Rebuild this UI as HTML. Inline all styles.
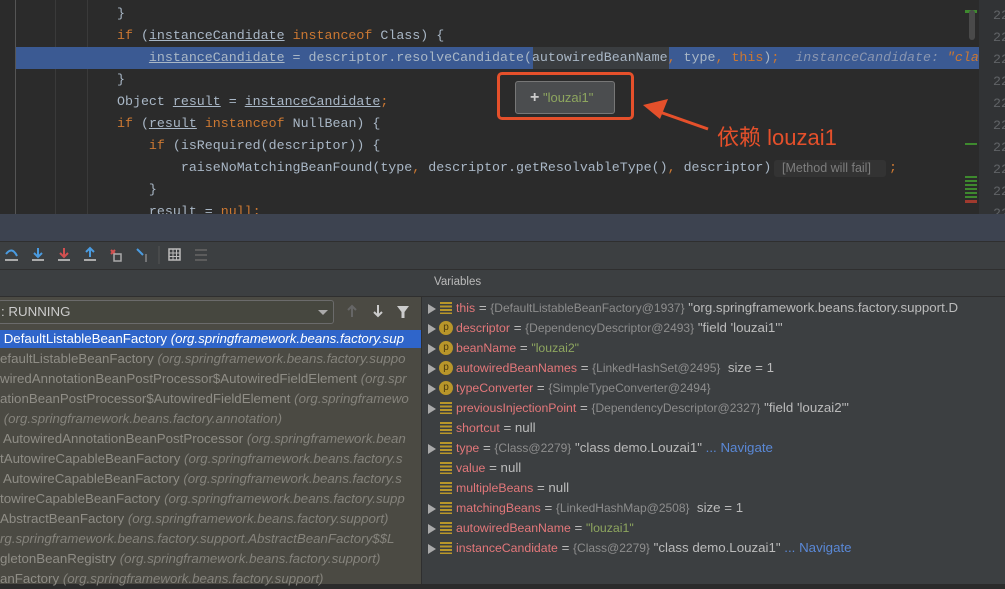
<!DOCTYPE html>
<html><head><meta charset="utf-8"><style>
*{margin:0;padding:0;box-sizing:border-box}
body{width:1005px;height:584px;overflow:hidden;background:#2b2b2b;position:relative;font-family:"Liberation Sans",sans-serif}
.ab{position:absolute}
.code{font-family:"Liberation Mono",monospace;font-size:13.3px;color:#a9b7c6;white-space:pre;line-height:22px}
.k{color:#cc7832}.u{text-decoration:underline}
.fr{position:absolute;left:0;font-size:13.3px;color:#8f8d86;white-space:pre;height:20px;line-height:20px}
.fr i{color:#85837c}
.vr{position:absolute;left:424px;height:20px;line-height:20px;font-size:13.3px;color:#bbb;white-space:pre}
.vr .a{position:absolute;left:4px;top:6px;width:0;height:0;border-left:8px solid #aaa;border-top:5px solid transparent;border-bottom:5px solid transparent}
.vr .l{position:absolute;left:16px;top:4px;width:12px;height:12px;background:repeating-linear-gradient(#b8962a 0 2px,transparent 2px 3.5px)}
.vr .p{position:absolute;left:15px;top:3px;width:14px;height:14px;border-radius:50%;background:#b8962a;color:#4a3a10;font-size:10px;line-height:14px;text-align:center}
.vr .t{position:absolute;left:32px}
.n{color:#e3777a;font-size:12.3px}.g{color:#8d8d8d;font-size:12px}.s{color:#8ea65f;font-size:12.3px}.nv{color:#5a88d6}
</style></head><body>
<div class="ab" style="left:15px;top:0;width:1px;height:214px;background:#555"></div>
<div class="ab" style="left:55px;top:0;width:1px;height:214px;background:#3a3a3a"></div>
<div class="ab" style="left:87px;top:0;width:1px;height:214px;background:#3a3a3a"></div>
<div class="ab" style="left:16px;top:47px;width:963px;height:22px;background:#3b5a93"></div>
<div class="ab" style="left:533px;top:47px;width:136px;height:22px;background:#3a3d40"></div>
<div class="ab code" style="left:117px;top:3px">}
<span class="k">if</span> (<span class="u">instanceCandidate</span> <span class="k">instanceof</span> Class) {
    <span class="u">instanceCandidate</span> = descriptor.resolveCandidate(autowiredBeanName<span class="k">,</span> type<span class="k">,</span> <span class="k">this</span>)<span class="k">;</span>  <i style="color:#8a96b0">instanceCandidate: </i><i class="k">"cla</i>
}
Object <span class="u">result</span> = <span class="u">instanceCandidate</span><span class="k">;</span>
<span class="k">if</span> (<span class="u">result</span> <span class="k">instanceof</span> NullBean) {
    <span class="k">if</span> (isRequired(descriptor)) {
        raiseNoMatchingBeanFound(type<span class="k">,</span> descriptor.getResolvableType()<span class="k">,</span> descriptor)
    }
    result = <span class="k">null;</span></div>
<div class="ab code k" style="left:889px;top:157px">;</div>
<div class="ab" style="left:774px;top:160px;width:112px;height:17px;background:#333;border-radius:3px;color:#7d7d7d;font-size:12.5px;line-height:17px;padding-left:8px">[Method will fail]</div>
<div class="ab" style="left:979px;top:0;width:26px;height:214px;background:#313335"></div>
<div class="ab code" style="left:993px;top:5px;color:#606366;line-height:22px">22
22
22
22
22
22
22
22
22
22</div>
<div class="ab" style="left:965px;top:10px;width:12px;height:3px;background:#3e8a2e"></div>
<div class="ab" style="left:969px;top:10px;width:6px;height:30px;background:#4a4a4a;border-radius:3px"></div>
<div class="ab" style="left:965px;top:143px;width:12px;height:2px;background:#3e8a2e"></div>
<div class="ab" style="left:965px;top:176px;width:12px;height:24px;background:repeating-linear-gradient(#3e8a2e 0 2px,transparent 2px 4px)"></div>
<div class="ab" style="left:965px;top:200px;width:12px;height:3px;background:#a03a2e"></div>
<div class="ab" style="left:497px;top:72px;width:137px;height:48px;border:3px solid #e5502b;border-radius:5px"></div>
<div class="ab" style="left:515px;top:81px;width:100px;height:33px;background:#4b4d4f;border:1px solid #777;border-radius:3px;font-size:13px;line-height:31px;color:#8ea65f;padding-left:14px"><b style="color:#ccc;font-size:16px">+</b> "louzai1"</div>
<svg class="ab" style="left:640px;top:95px" width="70" height="40"><line x1="68" y1="34" x2="14" y2="15" stroke="#e5502b" stroke-width="3"/><polygon points="3,10 28,4 20,24" fill="#e5502b"/></svg>
<div class="ab" style="left:717px;top:120px;font-size:22px;color:#e5502b;font-family:'Liberation Sans','Noto Sans CJK SC',sans-serif">依赖 louzai1</div>
<div class="ab" style="left:0;top:214px;width:1005px;height:27px;background:#3d4350"></div>
<div class="ab" style="left:0;top:241px;width:1005px;height:29px;background:#3c3f41;border-top:1px solid #2f2f2f"></div>
<div class="ab" style="left:0;top:269px;width:1005px;height:28px;background:#3c3f41;border-top:1px solid #2f2f2f;border-bottom:1px solid #2f2f2f"></div>
<div class="ab" style="left:434px;top:276px;font-size:11.5px;color:#bbb">Variables</div>
<svg class="ab" style="left:0;top:244px" width="220" height="22">
<g fill="none" stroke-width="2">
<path d="M6 10 q6-8 11 2" stroke="#4a9be0"/><line x1="5" y1="16" x2="18" y2="16" stroke="#aaa"/>
<path d="M38 4v8M34 9l4 4 4-4" stroke="#4a9be0"/><line x1="32" y1="16" x2="44" y2="16" stroke="#aaa"/>
<path d="M64 4v8M60 9l4 4 4-4" stroke="#d35050"/><line x1="58" y1="16" x2="70" y2="16" stroke="#aaa"/>
<path d="M90 13V5M86 8l4-4 4 4" stroke="#4a9be0"/><line x1="84" y1="16" x2="96" y2="16" stroke="#aaa"/>
<path d="M111 6l4 4M115 6l-4 4" stroke="#d35050"/><rect x="114" y="10" width="7" height="7" stroke="#aaa" stroke-width="1.5"/>
<path d="M137 5l6 6" stroke="#4a9be0"/><path d="M146 10v8" stroke="#aaa" stroke-width="1"/>
<line x1="159" y1="2" x2="159" y2="20" stroke="#555" stroke-width="1"/>
<rect x="169" y="5" width="11" height="11" stroke="#bbb" stroke-width="1.5"/><path d="M169 9h11M169 12.5h11M173 5v11M176.5 5v11" stroke="#bbb" stroke-width="1"/>
<path d="M195 6h12M195 11h12M195 16h12" stroke="#666" stroke-width="1.5"/>
</g></svg>
<div class="ab" style="left:0;top:297px;width:421px;height:287px;background:#4b4a43"></div>
<div class="ab" style="left:421px;top:297px;width:584px;height:287px;background:#3c3f41;border-left:1px solid #2f2f2f"></div>
<div class="ab" style="left:-2px;top:300px;width:336px;height:24px;border:1px solid #6b6b6b;border-radius:3px;background:#46473f;font-size:13.3px;color:#ccc;line-height:22px;padding-left:2px">: RUNNING</div>
<div class="ab" style="left:318px;top:310px;border-top:5px solid #aaa;border-left:5px solid transparent;border-right:5px solid transparent"></div>
<svg class="ab" style="left:345px;top:303px" width="70" height="18"><g stroke-width="2" fill="none"><path d="M7 14V3M3 7l4-4 4 4" stroke="#666"/><path d="M33 2v11M29 9l4 4 4-4" stroke="#ccc"/></g><path d="M52 3h12l-4.5 6v6h-3V9z" fill="#ccc"/></svg>
<div class="ab" style="left:0;top:330px;width:421px;height:18px;background:#2f65ca"></div>
<div class="fr" style="top:329px;color:#fff"> DefaultListableBeanFactory <i style="color:#fff">(org.springframework.beans.factory.sup</i></div>
<div class="fr" style="top:349px">efaultListableBeanFactory <i>(org.springframework.beans.factory.suppo</i></div>
<div class="fr" style="top:369px">wiredAnnotationBeanPostProcessor$AutowiredFieldElement <i>(org.spr</i></div>
<div class="fr" style="top:389px">ationBeanPostProcessor$AutowiredFieldElement <i>(org.springframewo</i></div>
<div class="fr" style="top:409px"> <i>(org.springframework.beans.factory.annotation)</i></div>
<div class="fr" style="top:429px"> AutowiredAnnotationBeanPostProcessor <i>(org.springframework.bean</i></div>
<div class="fr" style="top:449px">tAutowireCapableBeanFactory <i>(org.springframework.beans.factory.s</i></div>
<div class="fr" style="top:469px"> AutowireCapableBeanFactory <i>(org.springframework.beans.factory.s</i></div>
<div class="fr" style="top:489px">towireCapableBeanFactory <i>(org.springframework.beans.factory.supp</i></div>
<div class="fr" style="top:509px">AbstractBeanFactory <i>(org.springframework.beans.factory.support)</i></div>
<div class="fr" style="top:529px"><i>rg.springframework.beans.factory.support.AbstractBeanFactory$$L</i></div>
<div class="fr" style="top:549px">gletonBeanRegistry <i>(org.springframework.beans.factory.support)</i></div>
<div class="fr" style="top:569px">anFactory <i>(org.springframework.beans.factory.support)</i></div>
<div class="vr" style="top:298px"><span class="a"></span><span class="l"></span><span class="t"><span class="n">this</span> = <span class="g">{DefaultListableBeanFactory@1937}</span> "org.springframework.beans.factory.support.D</span></div>
<div class="vr" style="top:318px"><span class="a"></span><span class="p">p</span><span class="t"><span class="n">descriptor</span> = <span class="g">{DependencyDescriptor@2493}</span> "field 'louzai1'"</span></div>
<div class="vr" style="top:338px"><span class="a"></span><span class="p">p</span><span class="t"><span class="n">beanName</span> = <span class="s">"louzai2"</span></span></div>
<div class="vr" style="top:358px"><span class="a"></span><span class="p">p</span><span class="t"><span class="n">autowiredBeanNames</span> = <span class="g">{LinkedHashSet@2495}</span>  size = 1</span></div>
<div class="vr" style="top:378px"><span class="a"></span><span class="p">p</span><span class="t"><span class="n">typeConverter</span> = <span class="g">{SimpleTypeConverter@2494}</span></span></div>
<div class="vr" style="top:398px"><span class="a"></span><span class="l"></span><span class="t"><span class="n">previousInjectionPoint</span> = <span class="g">{DependencyDescriptor@2327}</span> "field 'louzai2'"</span></div>
<div class="vr" style="top:418px"><span class="l"></span><span class="t"><span class="n">shortcut</span> = null</span></div>
<div class="vr" style="top:438px"><span class="a"></span><span class="l"></span><span class="t"><span class="n">type</span> = <span class="g">{Class@2279}</span> "class demo.Louzai1" <span class="nv">... Navigate</span></span></div>
<div class="vr" style="top:458px"><span class="l"></span><span class="t"><span class="n">value</span> = null</span></div>
<div class="vr" style="top:478px"><span class="l"></span><span class="t"><span class="n">multipleBeans</span> = null</span></div>
<div class="vr" style="top:498px"><span class="a"></span><span class="l"></span><span class="t"><span class="n">matchingBeans</span> = <span class="g">{LinkedHashMap@2508}</span>  size = 1</span></div>
<div class="vr" style="top:518px"><span class="a"></span><span class="l"></span><span class="t"><span class="n">autowiredBeanName</span> = <span class="s">"louzai1"</span></span></div>
<div class="vr" style="top:538px"><span class="a"></span><span class="l"></span><span class="t"><span class="n">instanceCandidate</span> = <span class="g">{Class@2279}</span> "class demo.Louzai1" <span class="nv">... Navigate</span></span></div>
</body></html>
